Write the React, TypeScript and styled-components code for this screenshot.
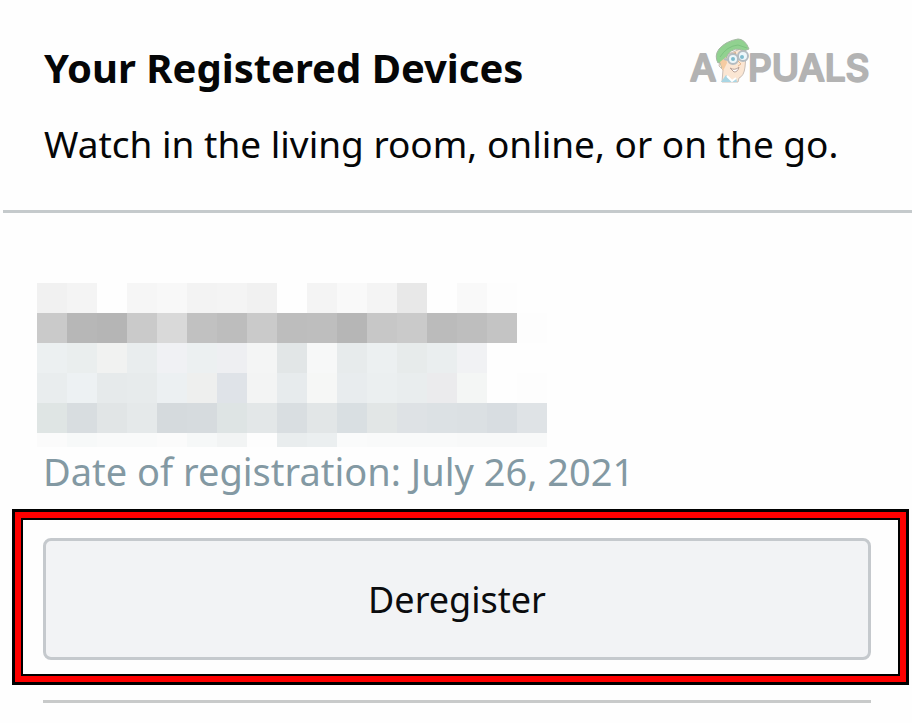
import React from "react";
import styled, { createGlobalStyle } from "styled-components";

const GlobalStyle = createGlobalStyle`
  *, *::before, *::after { box-sizing: border-box; }
  body {
    margin: 0;
    background: #fefefe;
    color: #050607;
    font-family: "Noto Sans", "Open Sans", sans-serif;
  }
`;

const Page = styled.main`
  display: flex;
  flex-direction: column;
  padding-left: 3px;
`;

const Header = styled.header`
  padding: 36px 36px 34px 41px;
  border-bottom: 3px solid #c5cacc;
`;

const TitleRow = styled.div`
  display: flex;
  align-items: flex-start;
  justify-content: space-between;
  height: 68px;
`;

const Title = styled.h1`
  margin: 0;
  font-size: 40px;
  line-height: 64px;
  font-weight: 700;
  white-space: nowrap;
`;

const Tagline = styled.p`
  margin: 0;
  padding-top: 8px;
  font-size: 37px;
  line-height: 64px;
  white-space: nowrap;
`;

const Logo = styled.svg`
  display: block;
  width: 190px;
  height: 60px;
  font-family: Inter, sans-serif;
  font-size: 37px;
  font-weight: 500;
`;

const Device = styled.section`
  display: flex;
  flex-direction: column;
  padding-top: 70px;
`;

const Mosaic = styled.div`
  display: grid;
  grid-template-columns: repeat(17, 30px);
  grid-template-rows: repeat(5, 30px) 14px;
  margin-left: 34px;
`;

const Cell = styled.span<{ $tone: string }>`
  background: ${(p) => p.$tone};
`;

const Registered = styled.p`
  margin: 0 0 14px 40px;
  color: #8399a3;
  font-size: 38px;
  line-height: 48px;
  white-space: nowrap;
`;

const Highlight = styled.div`
  display: flex;
  margin: 0 3px 0 9px;
  padding: 26px 35px 22px 28px;
  border: 3px solid #000;
  box-shadow: inset 0 0 0 6px #fe0000, inset 0 0 0 8px #000;
`;

const Button = styled.button`
  flex: 1;
  height: 122px;
  padding: 0;
  border: 3px solid #c5c9cd;
  border-radius: 8px;
  background: #f2f3f5;
  color: #0b0c0e;
  font: inherit;
  font-size: 36px;
  cursor: pointer;
`;

const Divider = styled.hr`
  width: auto;
  height: 3px;
  margin: 15px 41px 0 40px;
  border: 0;
  background: #c8caca;
`;

const tones = [
  "f1f1f1 f4f4f4 fefefe f6f6f6 f8f8f8 f3f3f3 f4f4f4 f1f1f1 fefefe f4f4f4 f9f9f9 f4f4f4 e8e8e8 fefefe f9f9f9 fdfdfd fefefe",
  "cacaca b7b7b7 b5b5b5 cacaca d9d9d9 c1c1c1 bdbdbd cacaca bdbdbd bebebe b6b6b6 c7c7c7 cacaca bbbbbb bebebe c4c4c4 fdfdfd",
  "ecf0f1 eaeeee f1f2f1 e9edee f0f1f4 ecf0f1 eeeff2 f4f5f5 e2e6e7 f7f8f8 e7ebec ecf0f1 e7ebeb eaeeef f1f2f4 fefefe fefefe",
  "e9edee edf1f3 e6eaeb e7ebec ecf0f2 eeefee dfe3e8 f3f4f4 e7ebed f6f7f6 e8ecee ebeff0 e9edee ebebed f4f6f5 fefefe fdfdfd",
  "dfe5e4 d8dde0 e1e5e6 e5e9ea d5dadd d6dbde dee4e4 e3e7e8 d9dee1 e2e6e7 d9dfe2 e2e6e6 dee2e5 dce1e4 dbe0e3 d8dde1 dfe3e6",
  "fbfbfb f7f9f9 f9fafa f9fafa fbfbfb f6f8f8 f2f4f4 fdfdfd e9edee ebeff0 fafbfb f9fafa f9fafa f9fafa f8f9f9 f8f9f9 f8f9f9",
].map((row) => row.split(" "));

function Mascot() {
  return (
    <g>
      <path d="M8 25L5 22L4 28L8 32L7 44H23L24 40Q29 38 30 29L31 18L25 11L9 18Z" fill="#fbe6d3" stroke="#c9beb6" />
      <path d="M6 44L11 37L17 43L21 40L22 44Z" fill="#a9d6e4" />
      <path d="M12 38L17 43L21 40" fill="none" stroke="#fff" strokeWidth="2" />
      <path d="M3 25Q-1 18 4 11Q11 3 23 1Q30 1 34 11L29 13Q20 8 13 16L9 25L7 30L5 24Z" fill="#91d190" stroke="#a5b7a3" />
      <path d="M5 19Q12 8 23 7L32 10" fill="none" stroke="#7dc380" />
      <path d="M5 24L8 33L12 25L11 19Z" fill="#f5cba1" />
      <path d="M15 17L21 15M26 13L30 14" stroke="#d3a983" strokeWidth="2" />
      <circle cx="18" cy="21" r="5" fill="#edf7fa" stroke="#b4bcc1" strokeWidth="2" />
      <circle cx="28" cy="18" r="5" fill="#edf7fa" stroke="#b4bcc1" strokeWidth="2" />
      <path d="M9 21L13 22" stroke="#b4bcc1" strokeWidth="2" />
      <circle cx="18" cy="21" r="2" fill="#7fbccd" />
      <circle cx="27" cy="19" r="2" fill="#7fbccd" />
      <path d="M23 23L26 26L23 28" fill="none" stroke="#e5b78e" />
      <path d="M15 30Q20 33 24 29Q23 34 19 34Z" fill="#fff" stroke="#b9a299" />
    </g>
  );
}

function Brand() {
  return (
    <Logo viewBox="0 0 190 60">
      <g fill="#b3b3b3" stroke="#b3b3b3" strokeWidth="2" strokeLinejoin="round" strokeLinecap="round">
        <text x="4" y="45">A</text>
        <text x="62" y="45">PUALS</text>
      </g>
      <g transform="translate(29 2)">
        <Mascot />
      </g>
    </Logo>
  );
}

export default function App() {
  return (
    <>
      <GlobalStyle />
      <Page>
        <Header>
          <TitleRow>
            <Title>Your Registered Devices</Title>
            <Brand />
          </TitleRow>
          <Tagline>Watch in the living room, online, or on the go.</Tagline>
        </Header>
        <Device>
          <Mosaic aria-hidden="true">
            {tones.map((row, r) => row.map((tone, c) => <Cell key={`${r}-${c}`} $tone={`#${tone}`} />))}
          </Mosaic>
          <Registered>Date of registration: July 26, 2021</Registered>
          <Highlight>
            <Button type="button">Deregister</Button>
          </Highlight>
          <Divider />
        </Device>
      </Page>
    </>
  );
}
